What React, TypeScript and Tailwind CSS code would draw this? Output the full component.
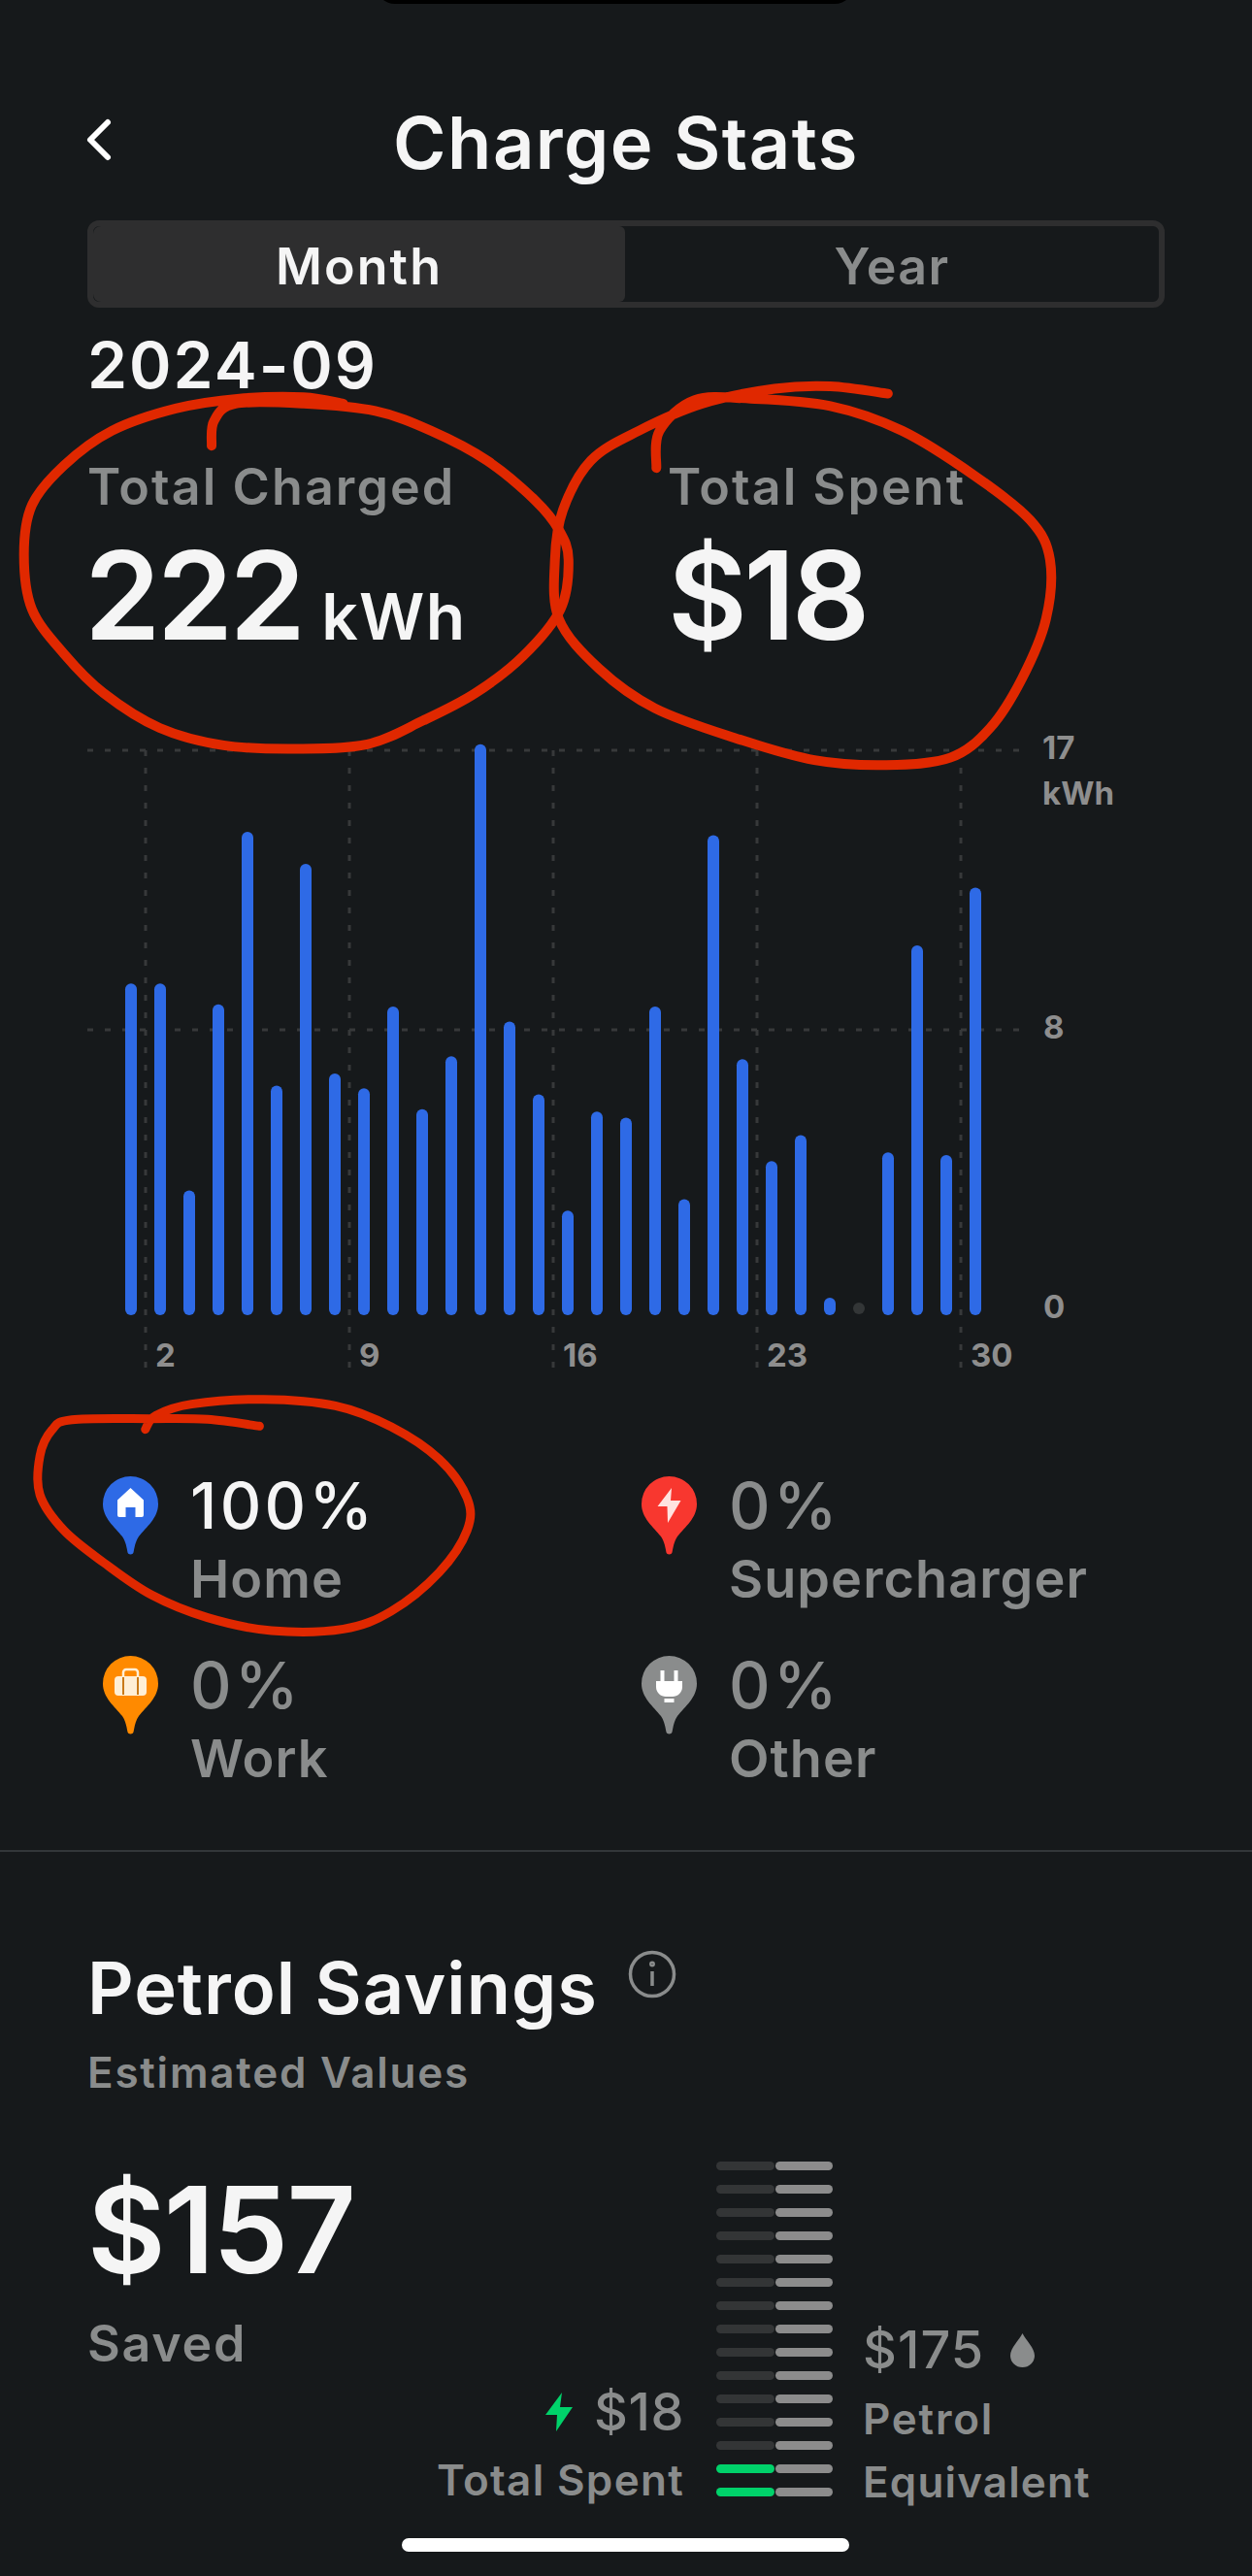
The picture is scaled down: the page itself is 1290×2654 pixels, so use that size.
import { ChevronLeft } from "lucide-react";

const barTops = [612, 612, 1090, 660, 262, 848, 336, 820, 854, 665, 902, 780, 60, 700, 868, 1136, 908, 922, 665, 1110, 270, 787, 1022, 962, 1337, 0, 1002, 524, 1008, 391];

// catmull-rom through the points, for the hand drawn marks
const smooth = (pts: [number, number][]) => {
  let d = `M${pts[0][0]} ${pts[0][1]}`;
  for (let i = 0; i < pts.length - 1; i++) {
    const p0 = pts[i - 1] || pts[i];
    const p1 = pts[i];
    const p2 = pts[i + 1];
    const p3 = pts[i + 2] || p2;
    d += ` C${p1[0] + (p2[0] - p0[0]) / 6} ${p1[1] + (p2[1] - p0[1]) / 6} ${p2[0] - (p3[0] - p1[0]) / 6} ${p2[1] - (p3[1] - p1[1]) / 6} ${p2[0]} ${p2[1]}`;
  }
  return d;
};
const fromTop = (pts: number[][]) => pts.map(([x, y]) => [x / 1.2155, y / 1.96] as [number, number]);
const fromMid = (pts: number[][]) => pts.map(([x, y]) => [x / 1.2155, 1400 + y / 3] as [number, number]);

const markOne = fromTop([[265, 900], [268, 850], [295, 815], [380, 815], [470, 830], [540, 870], [610, 930], [670, 1010], [700, 1070], [712, 1130], [702, 1230], [655, 1325], [595, 1400], [530, 1455], [460, 1503], [370, 1512], [280, 1505], [200, 1470], [130, 1400], [80, 1320], [40, 1230], [30, 1120], [40, 1020], [80, 940], [140, 870], [220, 825], [300, 805], [380, 802], [430, 815]]);
const markTwo = fromTop([[822, 945], [826, 870], [870, 808], [940, 805], [1040, 820], [1130, 870], [1220, 960], [1290, 1050], [1315, 1130], [1310, 1250], [1280, 1370], [1240, 1470], [1190, 1530], [1110, 1545], [1020, 1535], [920, 1490], [820, 1430], [750, 1350], [700, 1250], [695, 1130], [705, 1030], [740, 930], [800, 870], [880, 815], [970, 785], [1040, 780], [1112, 795]]);
const markThree = fromMid([[182, 218], [195, 175], [240, 140], [330, 125], [420, 145], [490, 210], [550, 310], [585, 430], [585, 530], [550, 660], [490, 780], [430, 835], [340, 840], [260, 800], [190, 730], [130, 630], [80, 530], [50, 420], [50, 300], [65, 220], [90, 188], [190, 185], [260, 187], [325, 208]]);

const PIN = "M28.5 0A28.5 28.5 0 0 1 57 28.5C57 43 45 52 37 62C33 68 32.5 74 31.5 78.5C31 81 26 81 25.5 78.5C24.5 74 24 68 20 62C12 52 0 43 0 28.5A28.5 28.5 0 0 1 28.5 0Z";

function Pin({ color, children }: { color: string; children: React.ReactNode }) {
  return (
    <svg width="57" height="81" viewBox="0 0 57 81" className="mt-[3px] shrink-0">
      <path d={PIN} fill={color} />
      {children}
    </svg>
  );
}

function Source({ pct, label, color, active, children }: { pct: string; label: string; color: string; active?: boolean; children: React.ReactNode }) {
  return (
    <div className="flex gap-[33px]">
      <Pin color={color}>{children}</Pin>
      <div>
        <div className={`text-[66px] leading-none font-medium tracking-[0.05em] ${active ? "text-[#f5f5f5]" : "text-[#8a8c8c]"}`}>{pct}</div>
        <div className="mt-[16px] text-[54px] leading-none font-semibold tracking-[0.02em] text-[#8a8c8c]">{label}</div>
      </div>
    </div>
  );
}

export default function App() {
  return (
    <div className="relative h-[2654px] w-[1290px] overflow-hidden bg-[#16191b] font-['Inter',sans-serif]">
      {/* status area */}
      <div className="absolute left-[387px] top-[-20px] h-[24px] w-[493px] rounded-b-[20px] bg-black" />

      <div className="px-[90px] pt-[110px]">
        <div className="flex items-center">
          <ChevronLeft className="ml-[-24px] mt-[-6px] h-[72px] w-[72px] shrink-0 text-white" strokeWidth={2} />
          <h1 className="ml-[-48px] flex-1 text-center text-[74px] leading-none font-semibold tracking-[0.02em] text-[#f5f5f5]">Charge Stats</h1>
        </div>

        <div className="mt-[43px] flex h-[90px] w-[1110px] rounded-[12px] border-[6px] border-[#2e2e2f] text-[52px] font-semibold tracking-[0.025em]">
          <div className="flex w-[548px] items-center justify-center rounded-l-[8px] rounded-r-[6px] bg-[#2e2e2f] pt-[5px] tracking-[0.04em] text-[#f5f5f5]">Month</div>
          <div className="flex flex-1 items-center justify-center pt-[5px] text-[#8a8c8c]">Year</div>
        </div>

        <div className="mt-[26px] text-[66px] leading-none font-semibold tracking-[0.03em] text-[#f5f5f5]">2024-09</div>

        <div className="mt-[67px] flex">
          <div className="w-[598px]">
            <div className="text-[52px] leading-none font-semibold tracking-[0.04em] text-[#8a8c8c]">Total Charged</div>
            <div className="mt-[22px] ml-[-3px] text-[126px] leading-none font-semibold tracking-[-0.03em] text-[#f5f5f5]">
              222<span className="ml-[20px] text-[66px] tracking-[0.02em]">kWh</span>
            </div>
          </div>
          <div>
            <div className="text-[52px] leading-none font-semibold tracking-[0.04em] text-[#8a8c8c]">Total Spent</div>
            <div className="mt-[22px] text-[126px] leading-none font-semibold tracking-[-0.03em] text-[#f5f5f5]">$18</div>
          </div>
        </div>
      </div>

      {/* chart */}
      <svg viewBox="0 750 1290 680" width="1290" height="680" className="mt-[74px] block">
        {[150, 360, 570, 780, 990].map((x) => (
          <line key={x} x1={x} x2={x} y1={773} y2={1412} stroke="#37393a" strokeWidth="3" strokeDasharray="6 12" />
        ))}
        {[773, 1061].map((y) => (
          <line key={y} x1={90} x2={1050} y1={y} y2={y} stroke="#37393a" strokeWidth="3" strokeDasharray="6 12" />
        ))}
        {barTops.map((top, i) => {
          const x = 135 + i * 30;
          if (i === 25) return <circle key={i} cx={x} cy={1348} r={6} fill="#333637" />;
          return <line key={i} x1={x} x2={x} y1={740 + top / 2.24 + 6} y2={1349} stroke="#2e6ae6" strokeWidth="12" strokeLinecap="round" />;
        })}
        <g fill="#8e8e8e" fontSize="33" fontWeight="700">
          <text x="1074" y="782">17</text>
          <text x="1074" y="829">kWh</text>
          <text x="1075" y="1070">8</text>
          <text x="1075" y="1358">0</text>
          <text x="160" y="1408">2</text>
          <text x="370" y="1408">9</text>
          <text x="580" y="1408">16</text>
          <text x="790" y="1408">23</text>
          <text x="1000" y="1408">30</text>
        </g>
      </svg>

      {/* charge sources */}
      <div className="mt-[88px] grid grid-cols-[555px_1fr] gap-y-[49px] pl-[106px]">
        <Source pct="100%" label="Home" color="#2e6ae6" active>
          <path d="M28.5 12L42 24.5V40a2 2 0 0 1-2 2H33.5V32H23.5V42H17a2 2 0 0 1-2-2V24.5Z" fill="#fff" />
        </Source>
        <Source pct="0%" label="Supercharger" color="#f8372f">
          <path d="M31 12L16.5 31H26.5L27 48L40.5 25H30Z" fill="#ffe3df" />
        </Source>
        <Source pct="0%" label="Work" color="#ff8a00">
          <path d="M21 21V17a3 3 0 0 1 3-3H33a3 3 0 0 1 3 3V21" fill="none" stroke="#ffefd6" strokeWidth="2.5" />
          <rect x="12" y="21" width="33" height="20" rx="4" fill="#ffefd6" />
          <path d="M21 22V40M36 22V40" stroke="#c97a1a" strokeWidth="2" />
        </Source>
        <Source pct="0%" label="Other" color="#8a8c8c">
          <path d="M19.5 15h4v11h-4ZM33.5 15h4v11h-4ZM15 26h27v6c0 6-5 10-10 10h-7c-5 0-10-4-10-10ZM23.5 44h10v4h-10Z" fill="#fff" />
        </Source>
      </div>

      <div className="mt-[67px] h-[2px] bg-[#33373a]" />

      {/* petrol savings */}
      <div className="pl-[90px]">
        <div className="mt-[103px] flex items-start">
          <h2 className="text-[74px] leading-none font-semibold tracking-[0.013em] text-[#f5f5f5]">Petrol Savings</h2>
          <svg width="50" height="50" viewBox="0 0 50 50" className="ml-[31px] mt-[-2px]" fill="none" stroke="#8a8c8c" strokeWidth="3.5">
            <circle cx="25" cy="25" r="22.5" />
            <path d="M25 22V37" />
            <circle cx="25" cy="14.5" r="1.2" />
          </svg>
        </div>
        <div className="mt-[28px] text-[44px] leading-none font-semibold tracking-[0.04em] text-[#8a8c8c]">Estimated Values</div>

        <div className="mt-[70px] flex h-[349px] items-end">
          <div className="w-[360px] self-start pt-[8px]">
            <div className="text-[124px] leading-none font-semibold tracking-[-0.015em] text-[#f5f5f5]">$157</div>
            <div className="mt-[30px] text-[52px] leading-none font-semibold tracking-[0.033em] text-[#8a8c8c]">Saved</div>
          </div>
          <div className="w-[255px] text-right whitespace-nowrap text-[#8a8c8c]">
            <div className="flex items-center justify-end gap-[22px] text-[54px] leading-none font-medium tracking-[0.01em]">
              <svg width="28" height="40" viewBox="0 0 28 40" className="shrink-0">
                <path d="M17 0L0 23H12L11 40L28 15H15Z" fill="#00d26a" />
              </svg>
              $18
            </div>
            <div className="mb-[-1px] mt-[21px] text-[44px] leading-none font-semibold tracking-[0.03em]">Total Spent</div>
          </div>
          <div className="mb-[4px] ml-[33px] flex w-[120px] flex-col gap-[15px]">
            {Array.from({ length: 15 }).map((_, i) => (
              <div key={i} className="flex h-[9px] gap-px">
                <div className={`flex-1 rounded-full ${i > 12 ? "bg-[#00d26a]" : "bg-[#333536]"}`} />
                <div className="flex-1 rounded-full bg-[#8c8c8c]" />
              </div>
            ))}
          </div>
          <div className="mb-[-3px] ml-[31px] text-[#8a8c8c]">
            <div className="flex items-center gap-[27px] text-[54px] leading-none font-medium tracking-[0.02em]">
              $175
              <svg width="25" height="35" viewBox="0 0 25 35" className="shrink-0">
                <path d="M12.5 0C16 7 25 15 25 23A12.5 12 0 0 1 0 23C0 15 9 7 12.5 0Z" fill="#8a8c8c" />
              </svg>
            </div>
            <div className="mt-[22px] text-[44px] leading-none font-semibold tracking-[0.04em]">Petrol</div>
            <div className="mt-[21px] text-[44px] leading-none font-semibold tracking-[0.026em]">Equivalent</div>
          </div>
        </div>
      </div>

      {/* home indicator */}
      <div className="absolute left-[414px] top-[2615px] h-[14px] w-[461px] rounded-full bg-white" />

      {/* red pen marks drawn over the screenshot */}
      <svg className="pointer-events-none absolute inset-0" width="1290" height="2654" fill="none" stroke="#e02800" strokeWidth="10" strokeLinecap="round" strokeLinejoin="round">
        <path d={smooth(markOne)} />
        <path d={smooth(markTwo)} />
        <path d={smooth(markThree)} strokeWidth="9" />
      </svg>
    </div>
  );
}
